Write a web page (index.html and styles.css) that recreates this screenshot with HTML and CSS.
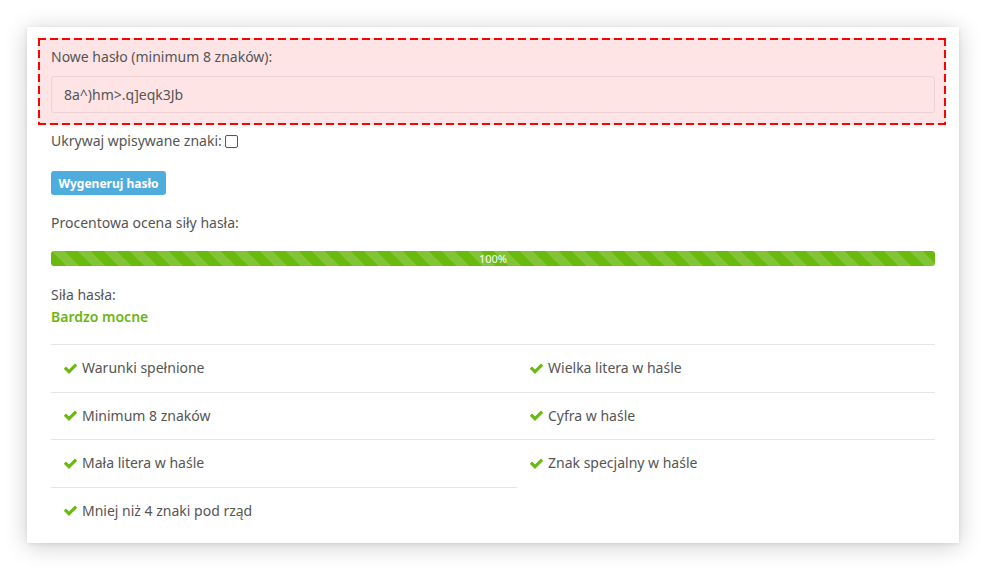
FILE: index.html
```html
<!DOCTYPE html>
<html lang="pl">
<head>
<meta charset="utf-8">
<link rel="stylesheet" href="styles.css">
</head>
<body>
<div class="card">
  <div class="pw-box">
    <label class="pw-label" for="pw">Nowe hasło (minimum 8 znaków):</label>
    <input class="pw-input" id="pw" type="text" value="8a^)hm&gt;.q]eqk3Jb">
  </div>
  <div class="hide-row">Ukrywaj wpisywane znaki:<span class="cbox"></span></div>
  <button class="btn-gen">Wygeneruj hasło</button>
  <div class="score-label">Procentowa ocena siły hasła:</div>
  <div class="progress"><div class="bar">100%</div></div>
  <div class="strength-label">Siła hasła:</div>
  <div class="strength-value">Bardzo mocne</div>
  <div class="rules">
    <ul class="rule-list">
      <li><svg class="chk" viewBox="0 0 1792 1792"><path d="M1671 566q0 40-28 68l-724 724-136 136q-28 28-68 28t-68-28l-136-136-362-362q-28-28-28-68t28-68l136-136q28-28 68-28t68 28l294 295 656-657q28-28 68-28t68 28l136 136q28 28 28 68z"/></svg>Warunki spełnione</li>
      <li><svg class="chk" viewBox="0 0 1792 1792"><path d="M1671 566q0 40-28 68l-724 724-136 136q-28 28-68 28t-68-28l-136-136-362-362q-28-28-28-68t28-68l136-136q28-28 68-28t68 28l294 295 656-657q28-28 68-28t68 28l136 136q28 28 28 68z"/></svg>Minimum 8 znaków</li>
      <li><svg class="chk" viewBox="0 0 1792 1792"><path d="M1671 566q0 40-28 68l-724 724-136 136q-28 28-68 28t-68-28l-136-136-362-362q-28-28-28-68t28-68l136-136q28-28 68-28t68 28l294 295 656-657q28-28 68-28t68 28l136 136q28 28 28 68z"/></svg>Mała litera w haśle</li>
      <li><svg class="chk" viewBox="0 0 1792 1792"><path d="M1671 566q0 40-28 68l-724 724-136 136q-28 28-68 28t-68-28l-136-136-362-362q-28-28-28-68t28-68l136-136q28-28 68-28t68 28l294 295 656-657q28-28 68-28t68 28l136 136q28 28 28 68z"/></svg>Mniej niż 4 znaki pod rząd</li>
    </ul>
    <ul class="rule-list">
      <li><svg class="chk" viewBox="0 0 1792 1792"><path d="M1671 566q0 40-28 68l-724 724-136 136q-28 28-68 28t-68-28l-136-136-362-362q-28-28-28-68t28-68l136-136q28-28 68-28t68 28l294 295 656-657q28-28 68-28t68 28l136 136q28 28 28 68z"/></svg>Wielka litera w haśle</li>
      <li><svg class="chk" viewBox="0 0 1792 1792"><path d="M1671 566q0 40-28 68l-724 724-136 136q-28 28-68 28t-68-28l-136-136-362-362q-28-28-28-68t28-68l136-136q28-28 68-28t68 28l294 295 656-657q28-28 68-28t68 28l136 136q28 28 28 68z"/></svg>Cyfra w haśle</li>
      <li><svg class="chk" viewBox="0 0 1792 1792"><path d="M1671 566q0 40-28 68l-724 724-136 136q-28 28-68 28t-68-28l-136-136-362-362q-28-28-28-68t28-68l136-136q28-28 68-28t68 28l294 295 656-657q28-28 68-28t68 28l136 136q28 28 28 68z"/></svg>Znak specjalny w haśle</li>
    </ul>
  </div>
</div>
</body>
</html>
```

FILE: styles.css
```css
* { box-sizing: border-box; }
html, body { margin: 0; padding: 0; background: #fff; }
body {
  font-family: "Noto Sans", "Open Sans", sans-serif;
  font-size: 14px;
  line-height: 20px;
  color: #555;
  padding: 27px 0 27px 27px;
}
.card {
  width: 932px;
  height: 516px;
  background: #fff;
  padding: 11px 24px 0 24px;
  box-shadow: 0 3px 22px rgba(0,0,0,0.2), 0 1px 4px rgba(0,0,0,0.08);
}
.pw-box {
  margin: 0 -11px 0 -13px;
  background-color: #fee4e5;
  background-image:
    repeating-linear-gradient(90deg, #f00 0 8px, transparent 8px 12px),
    repeating-linear-gradient(90deg, #f00 0 8px, transparent 8px 12px),
    repeating-linear-gradient(180deg, #f00 0 8px, transparent 8px 12px),
    repeating-linear-gradient(180deg, #f00 0 8px, transparent 8px 12px);
  background-size: 100% 2px, 100% 2px, 2px 100%, 2px 100%;
  background-position: 0 0, 0 100%, 0 0, 100% 0;
  background-repeat: no-repeat;
  padding: 9px 11px 12px 13px;
}
.pw-label { display: block; height: 20px; }
.pw-input {
  display: block;
  width: 100%;
  height: 37px;
  margin-top: 9px;
  background: #fee4e5;
  border: 1px solid #ecd2d6;
  border-radius: 3px;
  padding: 0 12px;
  font: inherit;
  color: #555;
  outline: none;
}
.hide-row {
  margin-top: 6px;
  display: flex;
  align-items: center;
  height: 20px;
}
.cbox {
  display: inline-block;
  width: 13px;
  height: 13px;
  margin-left: 3px;
  border: 1px solid #555;
  border-radius: 2px;
  background: #fff;
}
.btn-gen {
  display: block;
  margin-top: 20px;
  height: 24px;
  width: 115px;
  padding: 0;
  border: none;
  border-radius: 3px;
  background: #4fadde;
  color: #fff;
  font-family: inherit;
  font-weight: 700;
  font-size: 12px;
}
.score-label { margin-top: 18px; height: 20px; }
.progress {
  margin-top: 18px;
  height: 15px;
  border-radius: 3px;
  overflow: hidden;
  background: #eee;
}
.bar {
  height: 100%;
  width: 100%;
  background-color: #6ab90e;
  background-image: linear-gradient(45deg, rgba(255,255,255,.16) 25%, transparent 25%, transparent 50%, rgba(255,255,255,.16) 50%, rgba(255,255,255,.16) 75%, transparent 75%, transparent);
  background-size: 26px 26px;
  color: #fff;
  font-size: 11px;
  line-height: 15px;
  text-align: center;
}
.strength-label { margin-top: 19px; height: 20px; }
.strength-value {
  margin-top: 2px;
  height: 20px;
  color: #6cb50f;
  font-weight: 600;
}
.rules {
  margin-top: 17px;
  display: grid;
  grid-template-columns: 466px 1fr;
}
.rule-list { list-style: none; margin: 0; padding: 0; }
.rule-list li {
  border-top: 1px solid #e2e6ea;
  height: 47.5px;
  padding: 0 12px;
  display: flex;
  align-items: center;
}
.chk {
  width: 15px;
  height: 15px;
  fill: #6ab90e;
  margin-right: 4px;
}
```
